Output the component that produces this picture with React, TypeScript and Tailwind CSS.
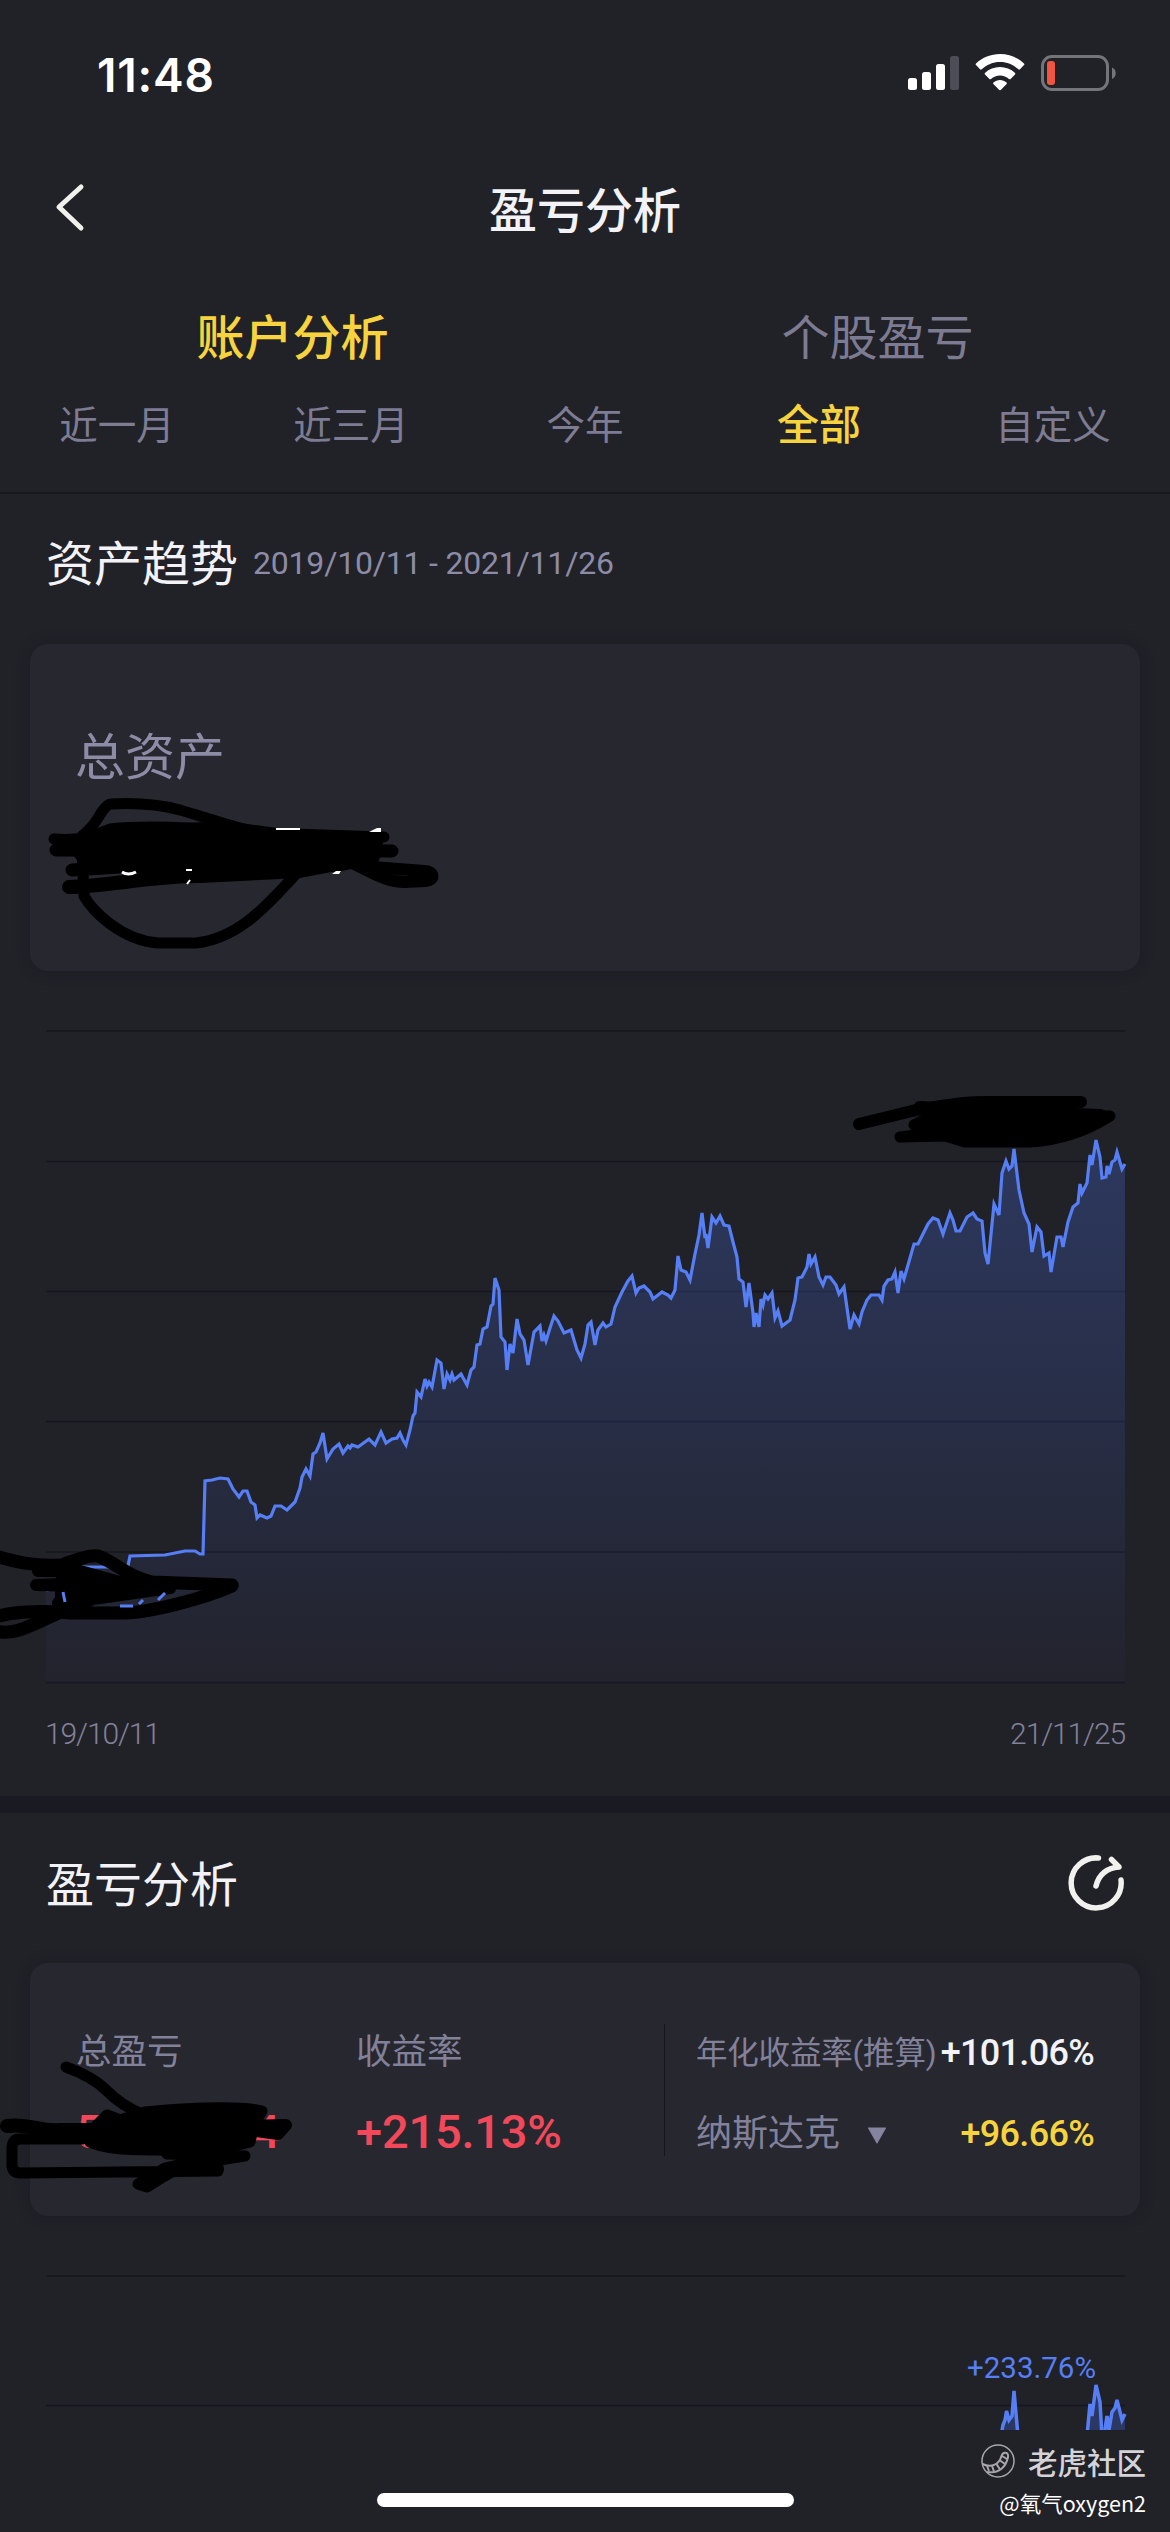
import { useState } from 'react';

type Point = [number, number];

const tabs = ['账户分析', '个股盈亏'];
const periods = ['近一月', '近三月', '今年', '全部', '自定义'];

const gridLines = [1031, 1161.5, 1291.5, 1421.5, 1552, 1682.5];

const trend: Point[] = [
  [46, 1590], [62, 1588], [64, 1567], [108, 1567], [128, 1566], [130, 1556], [165, 1555], [185, 1551], [195, 1551], [200, 1554],
  [203, 1554], [205, 1481], [212, 1480], [220, 1478], [228, 1479], [233, 1489], [239, 1497], [243, 1491], [247, 1491], [251, 1502],
  [255, 1505], [257, 1518], [260, 1515], [267, 1518], [271, 1516], [275, 1506], [281, 1506], [287, 1510], [295, 1502], [300, 1488],
  [302, 1477], [306, 1469], [310, 1476], [313, 1454], [316, 1452], [320, 1443], [323, 1433], [327, 1459], [333, 1449], [339, 1444],
  [343, 1453], [348, 1446], [350, 1448], [352, 1445], [358, 1447], [369, 1439], [375, 1445], [381, 1432], [386, 1443], [392, 1439],
  [397, 1438], [400, 1433], [403, 1440], [406, 1445], [410, 1430], [413, 1416], [415, 1413], [417, 1392], [421, 1397], [425, 1379],
  [427, 1386], [429, 1382], [432, 1387], [437, 1360], [441, 1363], [444, 1389], [447, 1374], [450, 1380], [452, 1374], [454, 1380],
  [461, 1374], [467, 1385], [471, 1370], [474, 1367], [477, 1345], [480, 1344], [483, 1329], [487, 1327], [491, 1306], [493, 1304],
  [495, 1278], [499, 1290], [501, 1337], [505, 1342], [507, 1370], [510, 1344], [513, 1353], [517, 1319], [520, 1334], [524, 1340],
  [528, 1365], [534, 1332], [540, 1326], [542, 1341], [544, 1335], [546, 1341], [550, 1328], [554, 1316], [558, 1321], [564, 1333],
  [571, 1330], [574, 1340], [577, 1350], [581, 1358], [585, 1344], [588, 1325], [591, 1322], [595, 1345], [598, 1330], [603, 1323],
  [606, 1327], [611, 1324], [615, 1307], [622, 1292], [628, 1281], [632, 1276], [636, 1293], [639, 1288], [644, 1286], [650, 1292],
  [653, 1299], [662, 1292], [668, 1295], [671, 1298], [675, 1290], [678, 1256], [681, 1270], [686, 1272], [690, 1280], [695, 1254],
  [699, 1235], [702, 1213], [705, 1238], [706, 1234], [708, 1248], [712, 1217], [716, 1223], [720, 1216], [724, 1225], [729, 1226],
  [733, 1242], [737, 1257], [739, 1279], [743, 1282], [746, 1307], [749, 1283], [753, 1313], [754, 1327], [756, 1313], [759, 1327],
  [761, 1299], [763, 1305], [765, 1295], [768, 1299], [772, 1293], [775, 1318], [778, 1311], [782, 1326], [790, 1320], [795, 1300],
  [798, 1278], [802, 1277], [807, 1267], [809, 1254], [811, 1264], [815, 1257], [819, 1277], [823, 1285], [826, 1277], [830, 1277],
  [836, 1285], [839, 1294], [844, 1287], [850, 1329], [854, 1315], [859, 1324], [862, 1312], [867, 1300], [871, 1295], [879, 1295],
  [882, 1300], [884, 1286], [888, 1280], [892, 1279], [895, 1272], [898, 1293], [901, 1271], [904, 1279], [914, 1244], [918, 1244],
  [928, 1224], [933, 1218], [938, 1220], [943, 1234], [950, 1213], [953, 1220], [956, 1231], [960, 1231], [967, 1217], [973, 1213],
  [977, 1219], [982, 1221], [985, 1253], [988, 1264], [994, 1204], [999, 1215], [1002, 1173], [1006, 1161], [1009, 1169], [1012, 1166],
  [1014, 1149], [1019, 1190], [1024, 1213], [1029, 1224], [1032, 1252], [1037, 1227], [1041, 1232], [1044, 1256], [1049, 1253],
  [1051, 1272], [1057, 1237], [1061, 1237], [1063, 1247], [1068, 1222], [1073, 1207], [1078, 1203], [1080, 1184], [1082, 1193],
  [1087, 1183], [1090, 1155], [1092, 1165], [1096, 1140], [1100, 1157], [1102, 1178], [1106, 1177], [1107, 1166], [1109, 1174],
  [1112, 1162], [1115, 1160], [1117, 1152], [1122, 1169], [1125, 1164],
];

const trendLine = trend.map(([x, y]) => `${x},${y}`).join(' ');

const StatusBar = () => (
  <div className="flex h-[132px] items-start justify-between pt-[45px] pl-[97px] pr-[50px]">
    <span className="font-['Inter'] text-[46px] font-semibold leading-[60px] tracking-[0.8px] text-white">11:48</span>
    <svg width="212" height="40" viewBox="0 0 212 40" className="mt-[7px]">
      <g fill="#fff">
        <rect x="0" y="26" width="9" height="12" rx="2.5" />
        <rect x="14" y="20" width="9" height="18" rx="2.5" />
        <rect x="28" y="12" width="9" height="26" rx="2.5" />
        <rect x="42" y="4" width="9" height="34" rx="2.5" fill="#4d4d57" />
        <path d="M92 2c9.200 0 17.600 3.500 24 9.500.5.500.5 1.100 0 1.600l-4 4.200c-.5.500-1.200.500-1.700 0C105.400 12.600 99 10 92 10s-13.400 2.600-18.300 7.300c-.5.500-1.200.5-1.700 0l-4-4.200c-.5-.5-.5-1.100 0-1.600C74.400 5.500 82.800 2 92 2z" />
        <path d="M92 15c5.700 0 10.900 2.200 14.900 5.800.5.500.6 1.200.1 1.700l-4.400 4.400c-.5.500-1.100.5-1.600.1C98.500 24.800 95.400 23.500 92 23.500s-6.500 1.300-9 3.500c-.5.400-1.100.4-1.600-.1L77 22.500c-.5-.5-.4-1.200.1-1.700C81.100 17.200 86.300 15 92 15z" />
        <path d="M92 28c2.400 0 4.700.9 6.500 2.400.5.400.5 1.100.1 1.600L93 37.700c-.6.600-1.400.6-2 0L85.400 32c-.4-.5-.4-1.200.1-1.600C87.300 28.900 89.600 28 92 28z" />
      </g>
      <rect x="134.500" y="4.500" width="65" height="33" rx="9.500" fill="none" stroke="#74757b" strokeWidth="3" />
      <rect x="139" y="9" width="8" height="24" rx="3" fill="#f0553f" />
      <path d="M204 15.500c5 2 5 9.500 0 11.500z" fill="#74757b" />
    </svg>
  </div>
);

const AssetChart = () => (
  <svg width="1170" height="724" viewBox="0 971 1170 724" className="block">
    <defs>
      <linearGradient id="fill" gradientUnits="userSpaceOnUse" x1="0" y1="1140" x2="0" y2="1683">
        <stop offset="0" stopColor="#4c78f5" stopOpacity="0.27" />
        <stop offset="1" stopColor="#4c78f5" stopOpacity="0.02" />
      </linearGradient>
    </defs>
    {gridLines.map((y) => (
      <line key={y} x1="46" x2="1125" y1={y} y2={y} stroke="#16161d" strokeWidth="1.500" />
    ))}
    <polygon points={`46,1683 ${trendLine} 1125,1683`} fill="url(#fill)" />
    <polyline points={trendLine} fill="none" stroke="#567ff6" strokeWidth="3.200" />
  </svg>
);

const RateChart = () => (
  <svg width="1170" height="214" viewBox="0 2216 1170 214" className="block">
    <line x1="46" x2="1125" y1="2276" y2="2276" stroke="#16161d" strokeWidth="1.500" />
    <line x1="46" x2="1125" y1="2405.500" y2="2405.500" stroke="#16161d" strokeWidth="1.500" />
    <g fill="#2b3863" stroke="#567ff6" strokeWidth="3.500">
      <path d="M1001 2436 L1003 2425 L1005 2420 L1006.500 2411 L1009 2420 L1012 2416 L1014 2391 L1018 2436" />
      <path d="M1087 2436 L1090 2404 L1092 2416 L1096 2385 L1100 2402 L1102 2436" />
      <path d="M1104 2436 L1107 2416 L1109 2430 L1112 2412 L1115 2408 L1117 2400 L1122 2420 L1125 2414 V2436" stroke="none" />
      <path d="M1104 2436 L1107 2416 L1109 2430 L1112 2412 L1115 2408 L1117 2400 L1122 2420 L1125 2414" fill="none" />
    </g>
    <text x="967" y="2378" fontSize="29.500" fill="#567ff6" textLength="129" fontFamily="Roboto">+233.76%</text>
  </svg>
);

// Marker strokes that hide the account amounts
const Scribbles = () => (
  <svg width="1170" height="2532" viewBox="0 0 1170 2532" className="pointer-events-none absolute left-0 top-0">
    <g fill="none" stroke="#000" strokeWidth="11" strokeLinecap="round" strokeLinejoin="round">
      <path d="M82 836 Q92 828 98 818 Q106 804 111 804 Q150 802 180 810 C215 820 250 834 300 840" />
      <path d="M54 839 C80 841 90 837 110 829 Q160 824 230 832 L384 837" />
      <path d="M56 850 L392 851" strokeWidth="13" />
      <path d="M72 870 L120 867 L330 858" strokeWidth="13" />
      <path d="M69 887 C110 886 150 876 200 876 L300 871 L352 861" strokeWidth="14" />
      <path d="M82 850 L84 896 C92 910 120 940 158 943 L196 943 C240 938 268 904 296 874" />
      <path d="M350 862 C372 872 385 882 405 882 L425 881 C436 880 434 871 424 871 L360 866" strokeWidth="12" />
      <path d="M70 842 L120 830 L230 827 L300 837 L378 840 L374 858 L340 866 L240 871 L175 874 L130 866 L84 860 Z" fill="#000" />

      <path d="M859 1124 L912 1111 C960 1102 970 1102 990 1102 L1081 1102" strokeWidth="12" />
      <path d="M900 1137 L925 1134 L914 1125 L940 1112 L1110 1116 C1085 1132 1060 1140 1030 1142 L965 1142 L945 1136 Z" fill="#000" />
      <path d="M920 1108 L1000 1112 L1100 1116" strokeWidth="14" />

      <path d="M-4 1556 C22 1564 40 1566 62 1565 C80 1558 92 1555 98 1556 C115 1562 128 1577 152 1582 L232 1585" strokeWidth="13" />
      <path d="M38 1571 L80 1571 L120 1582 L36 1585 L170 1588 L100 1598 L58 1603 L130 1588" strokeWidth="12" />
      <path d="M62 1572 L80 1575 L130 1584 L160 1586 L88 1596 L60 1603 Z" fill="#000" />
      <path d="M232 1586 C200 1600 150 1612 125 1613 L70 1613 C40 1610 10 1612 -4 1617" strokeWidth="13" />
      <path d="M-4 1631 C20 1638 46 1615 90 1600" strokeWidth="13" />

      <path d="M66 2067 C85 2074 98 2082 106 2090 Q122 2106 142 2114" />
      <path d="M7 2126 C30 2123 40 2132 60 2130 L90 2130" strokeWidth="14" />
      <path d="M107 2115 L92 2130 L90 2142 C110 2152 150 2150 220 2150 L250 2142 L254 2124 L262 2111 C240 2106 190 2108 145 2112 L120 2120 Z" fill="#000" />
      <path d="M240 2126 L286 2125 L278 2134 L250 2130" strokeWidth="12" />
      <path d="M82 2139 L20 2139 Q13 2139 12 2147 L12 2166 Q13 2173 20 2173 L218 2171 Q222 2162 190 2162 L165 2168 L138 2184 L147 2187 C165 2176 175 2168 200 2163 L245 2156 L167 2154" />
    </g>
    <g strokeLinecap="butt" fill="none">
      <path d="M276 829 H300" stroke="#fff" strokeWidth="2" />
      <path d="M122 872 Q128 876 136 872" stroke="#fff" strokeWidth="3" />
      <path d="M369 832 L377 828 L381 828 V832 Z" fill="#fff" />
      <path d="M332 874 L336 871 L341 871 L339 874 Z" fill="#fff" />
      <path d="M186 870 H192 M187 884 L190 880" stroke="#fff" strokeWidth="2" />
      <path d="M63 1592 L65 1602 M139 1604 L143 1600 M120 1606 H133 M158 1600 L165 1593" stroke="#567ff6" strokeWidth="3" />
    </g>
  </svg>
);

export default function App() {
  const [activeTab, setActiveTab] = useState('账户分析');
  const [period, setPeriod] = useState('全部');

  return (
    <div className="relative h-[2532px] w-[1170px] overflow-hidden bg-[#212128] font-['Roboto','Noto_Sans_CJK_SC',sans-serif] text-[#f2f2f7]">
      <StatusBar />

      {/* Title */}
      <header className="grid h-[154px] grid-cols-[200px_1fr_200px] items-center">
        <button className="pl-[53px] pb-[4px]" aria-label="返回">
          <svg width="32" height="50" viewBox="0 0 32 50" fill="none" stroke="#f1f1ec" strokeWidth="5" strokeLinecap="round" strokeLinejoin="round">
            <path d="M28 5 L6 25 L28 46" />
          </svg>
        </button>
        <h1 className="pt-[5px] text-center text-[48px] font-medium leading-[60px]">盈亏分析</h1>
      </header>

      <div className="grid h-[100px] grid-cols-2">
        {tabs.map((tab) => (
          <button
            key={tab}
            onClick={() => setActiveTab(tab)}
            className={`pt-[3px] text-[48px] leading-[100px] ${tab === activeTab ? 'font-medium text-[#f7d43e]' : 'text-[#7d7b92]'}`}
          >
            {tab}
          </button>
        ))}
      </div>

      <div className="grid h-[108px] grid-cols-5 items-start border-b-2 border-[#17171d]">
        {periods.map((item) => (
          <button
            key={item}
            onClick={() => setPeriod(item)}
            className={`pt-[2px] leading-[76px] ${item === period ? 'text-[42px] font-medium text-[#f7d43e]' : 'text-[38.500px] text-[#7d7c93]'}`}
          >
            {item}
          </button>
        ))}
      </div>

      {/* Asset trend */}
      <section>
        <div className="flex h-[150px] items-center gap-[15px] pl-[46px] pb-[12px]">
          <h2 className="pt-[4px] text-[48px] leading-[60px]">资产趋势</h2>
          <span className="text-[32px] leading-[60px] tracking-[-0.2px] text-[#8d8ca6]">2019/10/11 - 2021/11/26</span>
        </div>
        <div className="mx-[30px] h-[327px] rounded-[18px] bg-[#272730] pl-[45px] pt-[82px] shadow-[0_0_14px_rgba(20,20,28,0.35)]">
          <p className="text-[50px] leading-[64px] text-[#8d8ca6]">总资产</p>
        </div>
        <AssetChart />
        <div className="flex h-[101px] justify-between px-[45px] text-[30px] font-light leading-[77px] tracking-[-1.1px] text-[#83829a]">
          <span>19/10/11</span>
          <span>21/11/25</span>
        </div>
      </section>

      <div className="h-[17px] bg-[#1a1a22]" />

      {/* Profit and loss */}
      <section>
        <div className="flex h-[150px] items-center justify-between pl-[46px] pr-[45px] pb-[8px]">
          <h2 className="pt-[3px] text-[48px] leading-[60px]">盈亏分析</h2>
          <svg width="60" height="60" viewBox="0 0 60 60" fill="none" stroke="#f1f1ee" strokeWidth="5.500" strokeLinecap="round" strokeLinejoin="round">
            <path d="M33.500 4 A25 25 0 1 0 56 26" />
            <path d="M31 32 C34 20 42 14 54 13 L46.500 5.500" />
          </svg>
        </div>
        <div className="mx-[30px] flex h-[253px] rounded-[18px] bg-[#272730] pl-[46px] pr-[46px] shadow-[0_0_14px_rgba(20,20,28,0.35)]">
          <div className="w-[280px] pt-[64px]">
            <p className="text-[35.500px] leading-[50px] text-[#82819a]">总盈亏</p>
            <div className="mt-[24px] flex w-[204px] justify-between text-[47px] font-medium leading-[62px] text-[#f2485a]">
              <span>5</span>
              <span>4</span>
            </div>
          </div>
          <div className="w-[308px] pt-[64px]">
            <p className="text-[35.500px] leading-[50px] text-[#82819a]">收益率</p>
            <p className="mt-[24px] text-[47px] font-medium leading-[62px] tracking-[-0.2px] text-[#f2485a]">+215.13%</p>
          </div>
          <div className="mt-[61px] h-[132px] w-px bg-[#15151c]" />
          <div className="flex flex-1 flex-col pl-[31px] pt-[62px]">
            <div className="flex items-center justify-between leading-[54px]">
              <span className="whitespace-nowrap pt-[2px] text-[31.500px] tracking-[-0.2px] text-[#82819a]">年化收益率(推算)</span>
              <span className="text-[36px] font-medium tracking-[-0.7px]">+101.06%</span>
            </div>
            <div className="mt-[25px] flex items-center leading-[54px]">
              <span className="pt-[1px] text-[36px] text-[#82819a]">纳斯达克</span>
              <svg width="20" height="17" viewBox="0 0 18 16" className="ml-[27px] mt-[3px]">
                <path d="M1 1 H17 L9 15 Z" fill="#85849f" stroke="#85849f" strokeLinejoin="round" />
              </svg>
              <span className="ml-auto text-[36px] font-medium tracking-[-0.7px] text-[#f7d43e]">+96.66%</span>
            </div>
          </div>
        </div>
        <RateChart />
      </section>

      {/* Community mark */}
      <footer className="flex flex-col items-end pr-[24px] pt-[9px] font-['Noto_Sans_CJK_SC',sans-serif]">
        <div className="flex items-center gap-[13px] leading-[44px] text-[#d3d3d8]">
          <svg width="34" height="34" viewBox="0 0 34 34" fill="none" stroke="#a6a6ac">
            <circle cx="17" cy="17" r="16" strokeWidth="1.500" />
            <path d="M1.500 20 C10 24 18 21 20.500 12 C22 7 28 8 27 13 C25 23 18 30 6 28" strokeWidth="2" />
            <path d="M6 22 L8 27 M11 22 L13 27.500 M15.500 20 L19 25.500 M19 16.500 L24 20 M21 12 L26 15" strokeWidth="2" />
          </svg>
          <span className="text-[29.500px] font-medium">老虎社区</span>
        </div>
        <p className="text-[21.500px] leading-[40px] text-white">@氧气oxygen2</p>
      </footer>

      <div className="absolute bottom-[25px] left-[377px] h-[14px] w-[417px] rounded-full bg-white" />
      <Scribbles />
    </div>
  );
}
